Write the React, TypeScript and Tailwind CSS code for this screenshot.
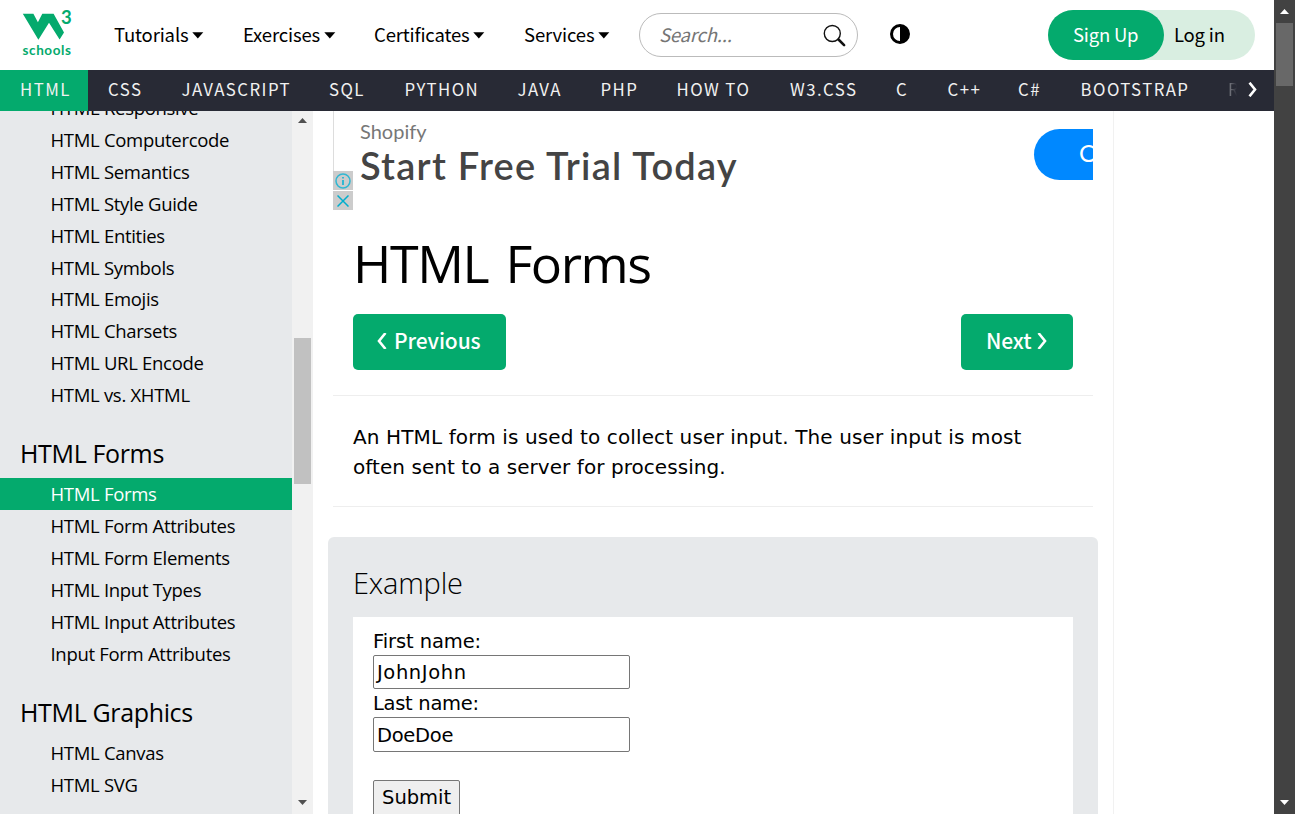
const SOURCE = 'font-["Noto_Sans_CJK_SC",sans-serif]';
const SEGOE = 'font-["Open_Sans","Noto_Sans",sans-serif]';
const VERDANA = 'font-["DejaVu_Sans",sans-serif]';

const topLinks = [
  { label: "Tutorials", cls: "w-[129px]" },
  { label: "Exercises", cls: "w-[131px]" },
  { label: "Certificates", cls: "w-[150px]" },
  { label: "Services", cls: "w-[115px]" },
];

const topics = [
  { label: "HTML", cls: "w-[88px] bg-[#04AA6D]" },
  { label: "CSS", cls: "w-[73.5px]" },
  { label: "JAVASCRIPT", cls: "w-[147.5px]" },
  { label: "SQL", cls: "w-[75.5px]" },
  { label: "PYTHON", cls: "w-[113px]" },
  { label: "JAVA", cls: "w-[83px]" },
  { label: "PHP", cls: "w-[76px]" },
  { label: "HOW TO", cls: "w-[113.5px]" },
  { label: "W3.CSS", cls: "w-[106px]" },
  { label: "C", cls: "w-[51.5px]" },
  { label: "C++", cls: "w-[70.5px]" },
  { label: "C#", cls: "w-[62.5px]" },
  { label: "BOOTSTRAP", cls: "w-[148.5px]" },
];

const basics = [
  "HTML Responsive",
  "HTML Computercode",
  "HTML Semantics",
  "HTML Style Guide",
  "HTML Entities",
  "HTML Symbols",
  "HTML Emojis",
  "HTML Charsets",
  "HTML URL Encode",
  "HTML vs. XHTML",
];
const forms = [
  "HTML Forms",
  "HTML Form Attributes",
  "HTML Form Elements",
  "HTML Input Types",
  "HTML Input Attributes",
  "Input Form Attributes",
];
const graphics = ["HTML Canvas", "HTML SVG"];

function Logo() {
  return (
    <div className='relative ml-[22px] h-[70px] w-[52px] shrink-0 font-["Lato",sans-serif] text-[#04AA6D]'>
      <svg className="absolute left-0 top-[13px]" width="43" height="28" viewBox="0 0 43 28" fill="currentColor">
        <path d="M.8.8h10.6l4.5 8.4L20.3.8h11.3L42 19.4l-4.4 7.2L27 9.8 16.4 26.8z" />
      </svg>
      <span className="absolute left-[39px] top-[6px] text-[18.5px] font-bold leading-[22px]">3</span>
      <span className="absolute left-[0.500px] top-[42px] text-[13.5px] font-bold leading-[16px] tracking-[0.6px]">schools</span>
    </div>
  );
}

function Caret() {
  return (
    <svg width="12" height="7" viewBox="0 0 12 7" className="mt-[2px]">
      <path d="M.3.3h11L5.8 6.4z" fill="#000" />
    </svg>
  );
}

function Header() {
  return (
    <header className={`flex h-[70px] items-center bg-white text-[18.5px] text-black ${SOURCE}`}>
      <Logo />
      <nav className="ml-[40px] flex pb-px">
        {topLinks.map((l) => (
          <a key={l.label} className={`flex items-center gap-[3.500px] whitespace-nowrap leading-[29px] tracking-[-0.15px] ${l.cls}`}>
            {l.label}
            <Caret />
          </a>
        ))}
      </nav>
      <div className="flex h-[44px] w-[219px] items-center justify-between rounded-full border border-[#bbb] pl-[19px] pr-[11px]">
        <span className="pb-[3px] italic leading-[30px] tracking-[-0.2px] text-[#757575]">Search...</span>
        <svg width="23" height="23" viewBox="0 0 23 23" fill="none" stroke="#111">
          <circle cx="9.3" cy="9.5" r="8" strokeWidth="1.4" />
          <path d="M15.5 15.5l5.6 5.6" strokeWidth="2.6" strokeLinecap="round" />
        </svg>
      </div>
      <svg className="-mt-[2px] ml-[32px]" width="20" height="20" viewBox="0 0 20 20">
        <circle cx="10" cy="10" r="8.5" fill="none" stroke="#000" strokeWidth="3" />
        <path d="M10 1a9 9 0 010 18z" fill="#000" />
      </svg>
      <div className="ml-[138px] flex h-[50px] w-[207px] items-center rounded-full bg-[#D9EEE1] tracking-[-0.2px]">
        <span className="flex h-full w-[116px] items-center rounded-full bg-[#04AA6D] pb-px pl-[25px] text-white">Sign Up</span>
        <span className="ml-[10px] pb-px tracking-[-0.2px]">Log in</span>
      </div>
    </header>
  );
}

function TopicBar() {
  return (
    <nav className={`flex h-[41px] overflow-hidden bg-[#282A35] text-[16.8px] tracking-[1.45px] text-[#f1f1f1] ${SOURCE}`}>
      {topics.map((t) => (
        <a key={t.label} className={`flex shrink-0 items-center whitespace-nowrap pb-px pl-[20px] ${t.cls}`}>
          {t.label}
        </a>
      ))}
      <div className="flex w-[65px] items-center pl-[19px]">
        <span className="w-[9px] shrink-0 overflow-hidden bg-gradient-to-r from-[#8a8b91] to-[#282A35] bg-clip-text pb-px text-transparent">R</span>
        <svg className="-mt-[3px] ml-[10.500px] shrink-0" width="10" height="15" viewBox="0 0 10 15" fill="none" stroke="#fff" strokeWidth="2.6">
          <path d="M1.500.7L7 7.500l-5.500 6.800" />
        </svg>
      </div>
    </nav>
  );
}

function MenuList({ items, active }: { items: string[]; active?: string }) {
  return (
    <ul>
      {items.map((item) => (
        <li
          key={item}
          className={`flex items-center whitespace-nowrap pl-[50.5px] ${active ? "h-[32px]" : "h-[31.9px]"} ${
            item === active ? "bg-[#04AA6D] text-white" : ""
          }`}
        >
          {item}
        </li>
      ))}
    </ul>
  );
}

function MenuHeading({ children }: { children: string }) {
  return <h2 className="flex h-[67px] items-center pl-[20px] pt-[18.500px] text-[25px] tracking-[-0.35px]">{children}</h2>;
}

function Sidebar() {
  return (
    <aside className="flex w-[313px] shrink-0 bg-[#E7E9EB]">
      <div className={`h-full w-[292px] overflow-hidden text-[18.5px] tracking-[-0.3px] text-black ${SEGOE}`}>
        <div className="-mt-[19px]">
          <MenuList items={basics} />
          <MenuHeading>HTML Forms</MenuHeading>
          <MenuList items={forms} active="HTML Forms" />
          <MenuHeading>HTML Graphics</MenuHeading>
          <MenuList items={graphics} />
        </div>
      </div>
      <div className="flex w-[21px] flex-col items-center bg-[#f1f1f1]">
        <svg className="mt-[7px] shrink-0" width="9" height="5" viewBox="0 0 9 5"><path d="M0 5h9L4.500 0z" fill="#505050" /></svg>
        <div className="mt-[215px] h-[146px] w-[17px] shrink-0 bg-[#c1c1c1]" />
        <svg className="mb-[9px] mt-auto shrink-0" width="9" height="5" viewBox="0 0 9 5"><path d="M0 0h9L4.500 5z" fill="#505050" /></svg>
      </div>
    </aside>
  );
}

function Ad() {
  return (
    <div className='flex h-[99px] justify-between pl-[5px] font-["Lato",sans-serif]'>
      <div className="flex">
        <div className="flex w-[20px] flex-col">
          <div className="h-[60px] border-l border-[#ddd]" />
          <div className="flex h-[19px] items-center justify-center bg-[#ccc]">
            <svg width="16" height="16" viewBox="0 0 16 16" fill="none" stroke="#30b7d2" strokeWidth="1.5">
              <circle cx="8" cy="8" r="7" />
              <path d="M8 7v5M8 4v1.600" strokeWidth="2" />
            </svg>
          </div>
          <div className="mt-px flex h-[19px] items-center justify-center bg-[#ccc]">
            <svg width="12" height="12" viewBox="0 0 12 12" stroke="#00aecd" strokeWidth="1.5">
              <path d="M.5.5l11 11M11.500.500l-11 11" />
            </svg>
          </div>
        </div>
        <div className="ml-[7px] whitespace-nowrap">
          <p className="mt-[7px] text-[20px] leading-[26px] text-[#777]">Shopify</p>
          <p className="-mt-px text-[38px] font-semibold leading-[44px] tracking-[1.25px] text-[#444]">Start Free Trial Today</p>
        </div>
      </div>
      <div className="mr-[5px] mt-[18px] h-[51px] w-[59px] overflow-hidden whitespace-nowrap rounded-l-full bg-[#0088ff] pl-[45px] text-[24px] leading-[48px] text-white">
        O
      </div>
    </div>
  );
}

function Main() {
  return (
    <main className="ml-[15px] w-[770px] shrink-0 text-black">
      <Ad />
      <h1 className={`ml-[25px] mt-[18px] h-[72px] whitespace-nowrap text-[52px] leading-[70px] tracking-[-1.4px] [word-spacing:5px] ${SEGOE}`}>HTML Forms</h1>
      <div className={`mx-[25px] mt-[14px] flex h-[56px] justify-between text-[21px] font-medium text-white ${SOURCE}`}>
        <a className="flex w-[153px] items-center gap-[6px] rounded-[5px] bg-[#04AA6D] pb-[2px] pl-[24px]">
          <svg width="10" height="16" viewBox="0 0 10 16" fill="none" stroke="#fff" strokeWidth="2.600"><path d="M8.500 0L2 8l6.500 8" /></svg>
          <span className="ml-px tracking-[-0.1px]">Previous</span>
        </a>
        <a className="flex w-[112px] items-center gap-[6px] rounded-[5px] bg-[#04AA6D] pb-[2px] pl-[25px] tracking-[-0.1px]">
          Next
          <svg width="10" height="16" viewBox="0 0 10 16" fill="none" stroke="#fff" strokeWidth="2.600"><path d="M1.500 0L8 8l-6.500 8" /></svg>
        </a>
      </div>
      <hr className="mx-[5px] mt-[25px] border-[#eee]" />
      <p className={`ml-[25px] mt-[26px] whitespace-nowrap text-[20px] leading-[30px] tracking-[0.12px] ${VERDANA}`}>
        An HTML form is used to collect user input. The user input is most
        <br />
        <span className="tracking-[0.06px]">often sent to a server for processing.</span>
      </p>
      <hr className="mx-[5px] mt-[24px] border-[#eee]" />
      <section className="mt-[30px] h-[300px] rounded-[6px] bg-[#E7E9EB] px-[25px] pt-[25px]">
        <h3 className={`h-[42px] text-[29px] font-light leading-[42px] tracking-[-0.2px] ${SEGOE}`}>Example</h3>
        <div className={`mt-[13px] h-[230px] bg-white pl-[20px] pt-[9px] text-[19.5px] ${VERDANA}`}>
          <p className="h-[29px] leading-[31px] tracking-[-0.1px]">First name:</p>
          <div className="h-[34px] w-[257px] rounded-[2px] border border-[#767676] pl-[3px] leading-[34px] tracking-[0.6px]">JohnJohn</div>
          <p className="h-[28px] leading-[29px] tracking-[-0.3px]">Last name:</p>
          <div className="h-[35px] w-[257px] rounded-[2px] border border-[#767676] pl-[3px] leading-[35px] tracking-[-0.3px]">DoeDoe</div>
          <div className="mt-[28px] h-[38px] w-[87px] rounded-[2px] border border-[#767676] bg-[#efefef] pl-[8px] leading-[33px]">Submit</div>
        </div>
      </section>
    </main>
  );
}

export default function App() {
  return (
    <div className="flex h-[814px] w-[1295px] overflow-hidden bg-white">
      <div className="flex w-[1274px] flex-col">
        <Header />
        <TopicBar />
        <div className="flex h-[703px] overflow-hidden">
          <Sidebar />
          <Main />
          <div className="ml-[15px] w-px bg-[#f1f1f1]" />
        </div>
      </div>
      <div className="flex w-[21px] flex-col items-center bg-[#424242]">
        <svg className="mt-[9px] shrink-0" width="9" height="5" viewBox="0 0 9 5"><path d="M0 5h9L4.500 0z" fill="#fff" /></svg>
        <div className="mt-[9px] h-[63px] w-[17px] bg-[#686868]" />
        <svg className="mb-[9px] mt-auto" width="9" height="5" viewBox="0 0 9 5"><path d="M0 0h9L4.500 5z" fill="#fff" /></svg>
      </div>
    </div>
  );
}
